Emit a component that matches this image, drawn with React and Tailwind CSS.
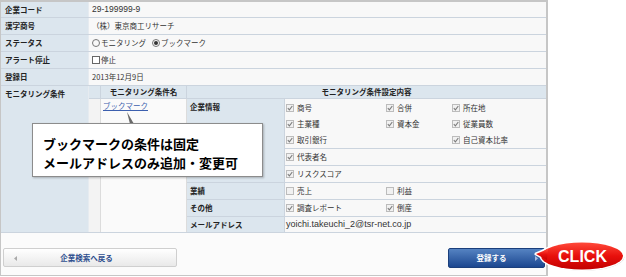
import React from 'react';

function Box({ on }) {
  return (
    <span className="inline-flex w-[8px] h-[8px] shrink-0 items-center justify-center border border-[#bcbcbc] bg-[#f1f1f1] mr-[3px]">
      {on && (
        <svg width="6" height="6" viewBox="0 0 6 6">
          <path d="M0.8 3.1 L2.4 4.8 L5.3 1" fill="none" stroke="#7c7c7c" strokeWidth="1.1" />
        </svg>
      )}
    </span>
  );
}

function Radio({ on }) {
  return (
    <span className="inline-flex w-[8px] h-[8px] shrink-0 rounded-full border border-[#777] items-center justify-center mr-[1px]">
      {on && <span className="w-[4px] h-[4px] rounded-full bg-[#333]" />}
    </span>
  );
}

function Item({ on, children }) {
  return (
    <span className="flex items-center">
      <Box on={on} />
      {children}
    </span>
  );
}

function Row({ label, h, children }) {
  return (
    <div className={`flex ${h} border-b border-[#cbd4de]`}>
      <div className="w-[88px] shrink-0 bg-[#dce6ee] border-r border-[#e6ebf0] pl-[4px] flex items-center font-bold text-[#222]">
        {label}
      </div>
      <div className="flex-1 bg-[#f8f8f8] pl-[2px] flex items-center">{children}</div>
    </div>
  );
}

export default function App() {
  const line = 'border-[#cbd4de]';
  return (
    <div className="relative w-[626px] h-[277px] bg-white font-['Noto_Sans_CJK_JP',sans-serif] text-[7.5px] text-[#333]">
      <div className="w-[548px] h-[276px] border-l border-t-2 border-r-2 border-b border-[#c6c6c6] flex flex-col">
        <Row label="企業コード" h="h-[16px]">
          <span className="font-['Liberation_Sans',sans-serif] text-[8.5px] pl-[1px]">29-199999-9</span>
        </Row>
        <Row label="漢字商号" h="h-[17px]">
          <span className="pl-[1px]">（株）東京商工リサーチ</span>
        </Row>
        <Row label="ステータス" h="h-[17px]">
          <span className="flex items-center pl-[1px]">
            <Radio />
            モニタリング
            <span className="w-[6px]" />
            <Radio on />
            ブックマーク
          </span>
        </Row>
        <Row label="アラート停止" h="h-[17px]">
          <span className="flex items-center pl-[1px]">
            <span className="inline-block w-[8px] h-[8px] border border-[#666] bg-white mr-[1px]" />
            停止
          </span>
        </Row>
        <Row label="登録日" h="h-[17px]">
          <span className="pl-[1px]">2013年12月9日</span>
        </Row>

        <div className={`flex h-[147px] border-b ${line}`}>
          <div className="w-[88px] shrink-0 bg-[#dce6ee] border-r border-[#e6ebf0] pl-[4px] pt-[2px] font-bold text-[#222]">
            モニタリング条件
          </div>
          <div className="flex-1 grid grid-cols-[12px_86px_98px_1fr] grid-rows-[13px_50px_17px_17px_17px_17px_15px]">
            <div className={`bg-[#dce6ee] border-r border-b ${line}`} />
            <div className={`bg-[#dce6ee] border-r border-b ${line} flex items-center justify-center font-bold text-[#222]`}>
              モニタリング条件名
            </div>
            <div className={`col-span-2 bg-[#dce6ee] border-b ${line} flex items-center justify-center font-bold text-[#222]`}>
              モニタリング条件設定内容
            </div>

            <div className="row-span-6 bg-[#f3f3f3] border-r border-[#dcdcdc]" />
            <div className="row-span-6 bg-[#fafafa] border-r border-[#dcdcdc] pl-[2px] pt-[1px]">
              <a className="text-[#3c5fae] underline">ブックマーク</a>
            </div>

            <div className={`row-span-3 bg-[#dce6ee] border-r border-b ${line} pl-[3px] pt-[2px] font-bold text-[#222]`}>
              企業情報
            </div>
            <div className={`bg-[#f8f8f8] border-b ${line} pl-[1px] grid grid-cols-[100px_66px_1fr] auto-rows-[16px] items-center pt-[1px]`}>
              <Item on>商号</Item>
              <Item on>合併</Item>
              <Item on>所在地</Item>
              <Item on>主業種</Item>
              <Item on>資本金</Item>
              <Item on>従業員数</Item>
              <Item on>取引銀行</Item>
              <span />
              <Item on>自己資本比率</Item>
            </div>
            <div className={`bg-[#f8f8f8] border-b ${line} pl-[1px] flex items-center`}>
              <Item on>代表者名</Item>
            </div>
            <div className={`bg-[#f8f8f8] border-b ${line} pl-[1px] flex items-center`}>
              <Item on>リスクスコア</Item>
            </div>

            <div className={`bg-[#dce6ee] border-r border-b ${line} pl-[3px] flex items-center font-bold text-[#222]`}>業績</div>
            <div className={`bg-[#f8f8f8] border-b ${line} pl-[1px] grid grid-cols-[100px_1fr] items-center`}>
              <Item>売上</Item>
              <Item>利益</Item>
            </div>

            <div className={`bg-[#dce6ee] border-r border-b ${line} pl-[3px] flex items-center font-bold text-[#222]`}>その他</div>
            <div className={`bg-[#f8f8f8] border-b ${line} pl-[1px] grid grid-cols-[100px_1fr] items-center`}>
              <Item on>調査レポート</Item>
              <Item on>倒産</Item>
            </div>

            <div className={`bg-[#dce6ee] border-r ${line} pl-[3px] flex items-center font-bold text-[#222]`}>メールアドレス</div>
            <div className="bg-[#f8f8f8] pl-[1px] flex items-center font-['Liberation_Sans',sans-serif] text-[9px]">
              yoichi.takeuchi_2@tsr-net.co.jp
            </div>
          </div>
        </div>

        <div className="flex-1 bg-[#fbfbfb] flex items-start justify-between pt-[15px] pl-[2px] pr-[1px]">
          <button className="relative w-[174px] h-[19px] border border-[#cfcfcf] rounded-[2px] bg-gradient-to-b from-white to-[#e9e9e9] flex items-center justify-center font-bold text-[#2f4f8f]">
            <svg className="absolute left-[10px] top-[7px]" width="3" height="5" viewBox="0 0 3 5">
              <path d="M3 0 L0 2.5 L3 5 Z" fill="#a9a9a9" />
            </svg>
            <span className="ml-[-7px]">企業検索へ戻る</span>
          </button>
          <button className="relative w-[97px] h-[20px] border border-[#1b3f7c] rounded-[2px] bg-gradient-to-b from-[#5583c2] to-[#1c4790] flex items-center justify-center font-bold text-white">
            <span className="ml-[-10px]">登録する</span>
            <svg className="absolute right-[6px] top-[7px]" width="3" height="5" viewBox="0 0 3 5">
              <path d="M0 0 L3 2.5 L0 5 Z" fill="#a9bddf" />
            </svg>
          </button>
        </div>
      </div>

      {/* callout */}
      <svg className="absolute left-[124px] top-[110px]" width="14" height="15" viewBox="0 0 14 15">
        <polygon points="3,2 6,14 10,14" fill="#6a6a6a" />
      </svg>
      <div className="absolute left-[32px] top-[123px] w-[231px] h-[54px] bg-white border border-[#8c8c8c] shadow-[1px_1px_2px_rgba(0,0,0,0.25)] pl-[10px] pt-[10px] text-[13px] leading-[19px] font-bold text-black">
        <div>ブックマークの条件は固定</div>
        <div>メールアドレスのみ追加・変更可</div>
      </div>

      {/* click bubble */}
      <svg className="absolute left-[528px] top-[238px]" width="98" height="36" viewBox="0 0 98 36">
        <defs>
          <linearGradient id="red" x1="0" y1="0" x2="0" y2="1">
            <stop offset="0" stopColor="#ff4a3a" />
            <stop offset="0.5" stopColor="#e8100c" />
            <stop offset="1" stopColor="#c20000" />
          </linearGradient>
        </defs>
        <g transform="translate(1.2 1.2)" fill="#9a9a9a" opacity="0.6">
          <ellipse cx="54" cy="18" rx="41" ry="13.5" />
          <polygon points="8,16 20,11 19,22" />
        </g>
        <g fill="white" stroke="white" strokeWidth="3" strokeLinejoin="round">
          <ellipse cx="54" cy="18" rx="41" ry="13.5" />
          <polygon points="8,16 20,11 19,22" />
        </g>
        <g fill="url(#red)">
          <ellipse cx="54" cy="18" rx="41" ry="13.5" />
          <polygon points="8,16 20,11 19,22" />
        </g>
        <text x="54.5" y="24" textAnchor="middle" fill="white" fontFamily="Liberation Sans, Arial, sans-serif" fontWeight="bold" fontSize="16">
          CLICK
        </text>
      </svg>
    </div>
  );
}
